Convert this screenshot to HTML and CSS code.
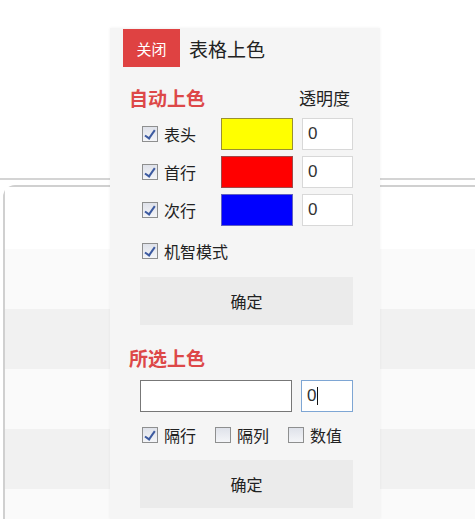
FILE: index.html
```html
<!DOCTYPE html>
<html lang="zh-CN">

<head>
    <meta charset="UTF-8">
    <meta name="viewport" content="width=device-width, initial-scale=1.0">
    <title>表格上色</title>
    <link rel="stylesheet" href="styles.css">
</head>

<body>

    <!-- Ventana de fondo (tabla) -->
    <div class="backdrop">
        <div class="frame-line"></div>
        <div class="window">
            <div class="row row-white"></div>
            <div class="row row-soft"></div>
            <div class="row row-gray"></div>
            <div class="row row-soft"></div>
            <div class="row row-gray"></div>
            <div class="row row-soft row-last"></div>
        </div>
    </div>

    <!-- Panel flotante -->
    <div class="panel">
        <div class="panel-head">
            <button class="close-button">关闭</button>
            <span class="panel-title">表格上色</span>
        </div>

        <div class="section-head">
            <span class="section-title">自动上色</span>
            <span class="alpha-label">透明度</span>
        </div>

        <div class="color-rows">
            <label class="check"><span class="box on"></span>表头</label>
            <span class="swatch swatch-yellow"></span>
            <span class="num-box">0</span>

            <label class="check"><span class="box on"></span>首行</label>
            <span class="swatch swatch-red"></span>
            <span class="num-box">0</span>

            <label class="check"><span class="box on"></span>次行</label>
            <span class="swatch swatch-blue"></span>
            <span class="num-box">0</span>
        </div>

        <label class="check smart"><span class="box on"></span>机智模式</label>

        <button class="ok-button">确定</button>

        <div class="section-head second">
            <span class="section-title">所选上色</span>
        </div>

        <div class="pick-row">
            <span class="pick-box"></span>
            <span class="num-box focused">0<span class="caret"></span></span>
        </div>

        <div class="option-row">
            <label class="check"><span class="box on"></span>隔行</label>
            <label class="check"><span class="box"></span>隔列</label>
            <label class="check"><span class="box"></span>数值</label>
        </div>

        <button class="ok-button">确定</button>
    </div>

</body>

</html>
```

FILE: styles.css
```css
/* Estilos generales */
body {
    margin: 0;
    height: 519px;
    overflow: hidden;
    background-color: #fff;
    font-family: "Noto Sans CJK SC", "Noto Sans", sans-serif;
    color: #222;
}

/* Ventana de fondo */
.backdrop {
    padding-top: 178px;
}

.frame-line {
    height: 2px;
    background-color: #d4d4d4;
}

.window {
    margin: 5px 0 0 3px;
    border-top: 2px solid #d0d0d0;
    border-left: 2px solid #d0d0d0;
    border-top-left-radius: 12px;
}

.row {
    height: 60px;
}

.row-white {
    height: 62px;
    background-color: #fff;
}

.row-soft {
    background-color: #fafafa;
}

.row-gray {
    background-color: #f1f1f1;
}

.row-last {
    height: 30px;
}

/* Panel flotante */
.panel {
    position: absolute;
    top: 28px;
    left: 110px;
    width: 270px;
    bottom: 0;
    background-color: #f5f5f5;
    box-shadow: 0 0 3px rgba(0, 0, 0, 0.06);
    padding: 1px 0 0 0;
    box-sizing: border-box;
}

.panel-head {
    display: flex;
    align-items: center;
    gap: 9px;
    padding-left: 13px;
}

.close-button {
    width: 57px;
    height: 38px;
    border: none;
    background-color: #df4242;
    color: #fff;
    font-family: inherit;
    font-size: 15px;
    padding: 0;
}

.panel-title {
    font-size: 19px;
    color: #222;
}

.section-head {
    display: flex;
    justify-content: space-between;
    align-items: center;
    padding: 17px 30px 0 19px;
    height: 26px;
}

.section-head.second {
    padding-top: 19px;
}

.section-title {
    font-size: 19px;
    font-weight: bold;
    color: #dd4848;
}

.alpha-label {
    font-size: 17px;
    color: #222;
}

/* Filas de color */
.color-rows {
    display: grid;
    grid-template-columns: 70px 72px 51px;
    column-gap: 9px;
    row-gap: 6px;
    align-items: center;
    padding: 8px 0 0 32px;
}

.check {
    display: flex;
    align-items: center;
    gap: 6px;
    font-size: 16px;
    color: #222;
}

.box {
    width: 16px;
    height: 16px;
    box-sizing: border-box;
    border: 1px solid #8e8f8f;
    background: linear-gradient(#dfe2ea, #f4f5f8);
    position: relative;
}

.box.on::after {
    content: "";
    position: absolute;
    left: 4px;
    top: 1px;
    width: 4px;
    height: 9px;
    border-right: 2px solid #3c5aa0;
    border-bottom: 2px solid #3c5aa0;
    transform: rotate(35deg);
}

.swatch {
    height: 32px;
    box-sizing: border-box;
    border: 1px solid #8a8a6a;
}

.swatch-yellow {
    background-color: #ffff00;
    border-color: #9a9030;
}

.swatch-red {
    background-color: #ff0000;
    border-color: #a04848;
}

.swatch-blue {
    background-color: #0000ff;
    border-color: #6060c0;
}

.num-box {
    height: 32px;
    box-sizing: border-box;
    border: 1px solid #d8d8d8;
    background-color: #fff;
    display: flex;
    align-items: center;
    padding-left: 5px;
    font-family: "Liberation Sans", sans-serif;
    font-size: 17px;
    color: #333;
}

.smart {
    padding: 13px 0 0 32px;
}

/* Botones */
.ok-button {
    display: block;
    margin: 14px 0 0 30px;
    width: 213px;
    height: 48px;
    border: none;
    background-color: #ebebeb;
    font-family: inherit;
    font-size: 16px;
    color: #222;
}

/* Selección */
.pick-row {
    display: flex;
    gap: 9px;
    padding: 10px 0 0 30px;
}

.pick-box {
    width: 152px;
    height: 32px;
    box-sizing: border-box;
    border: 1px solid #777;
    background-color: #fff;
}

.pick-row .num-box {
    width: 52px;
}

.num-box.focused {
    border-color: #7ea6d4;
}

.caret {
    width: 1px;
    height: 18px;
    background-color: #111;
    margin-left: 1px;
}

.option-row {
    display: flex;
    gap: 19px;
    padding: 11px 0 0 32px;
}

.option-row + .ok-button {
    margin-top: 13px;
}
```
